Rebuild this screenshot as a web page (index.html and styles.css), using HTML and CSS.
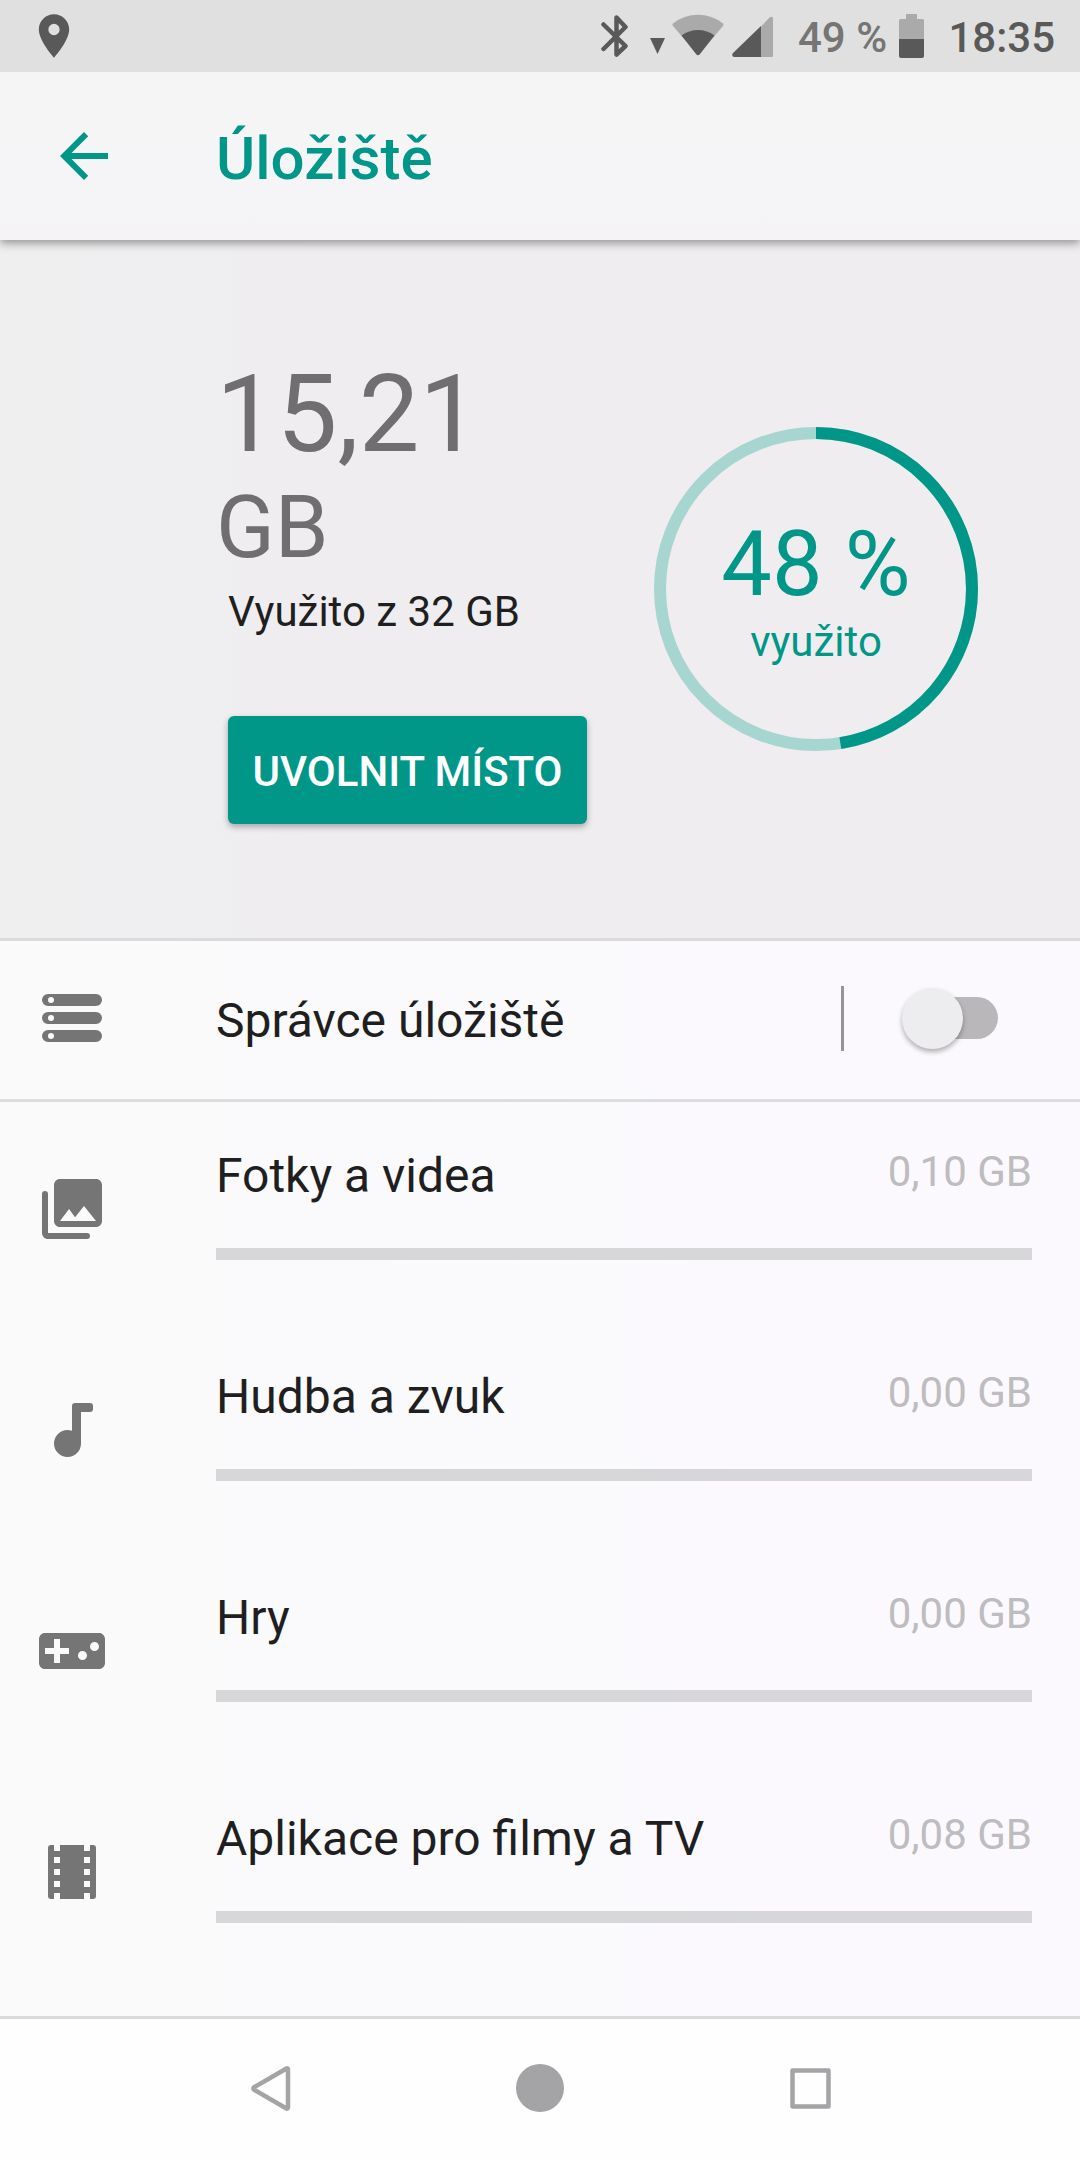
FILE: index.html
```html
<!DOCTYPE html>
<html lang="cs">
<head>
<meta charset="utf-8">
<title>Úložiště</title>
<link rel="stylesheet" href="styles.css">
</head>
<body>
<div class="screen">
  <div class="status">
    <svg class="pin" viewBox="0 0 24 24" width="52" height="52"><path fill-rule="evenodd" d="M12 2C8.130 2 5 5.130 5 9c0 5.250 7 13 7 13s7-7.750 7-13c0-3.870-3.130-7-7-7zm0 9.600a2.600 2.600 0 0 1 0-5.200 2.600 2.600 0 0 1 0 5.200z"/></svg>
    <svg class="bluetooth" viewBox="0 0 28 44" width="28" height="44"><path d="M2.500 10.500 24.500 32 15.500 40.500V3.500L24.500 13 2.500 35" fill="none" stroke="#595959" stroke-width="4.500" stroke-linecap="round" stroke-linejoin="round"/></svg>
    <svg class="data" viewBox="0 0 15 16" width="15" height="16"><path d="M0 0h15L7.500 16z"/></svg>
    <svg class="wifi" viewBox="0 0 52 42" width="52" height="42"><path class="dim" d="M1 9.500Q12 .8 26 .8t25 8.700q1 1 .2 2.200L42 22.500 26 40 10 22.500 .8 11.700Q0 10.500 1 9.500z"/><path d="M9.500 21.500Q17 16 26 16t16.500 5.500L28 40q-2 2.500-4 0z"/></svg>
    <svg class="signal" viewBox="0 0 41 42" width="41" height="42"><path class="dim" d="M29 10.500 37 2q4-3 4 1v37q0 1-1 1H29z"/><path d="M29 10v31H2q-3-1-1-4z"/></svg>
    <span class="percent">49 %</span>
    <svg class="battery" viewBox="0 0 25 44" width="25" height="44"><path class="dim" d="M7 0h11v5h5.500Q25 5 25 6.500V25H0V6.500Q0 5 1.500 5H7z"/><path d="M0 25h25v17q0 2-2 2H2q-2 0-2-2z"/></svg>
    <span class="clock">18:35</span>
  </div>

  <header class="appbar">
    <svg viewBox="0 0 24 24" width="72" height="72"><path d="M20 11H7.830l5.590-5.590L12 4l-8 8 8 8 1.410-1.410L7.830 13H20z"/></svg>
    <h1>Úložiště</h1>
  </header>

  <section class="summary">
    <div class="usage">
      <div class="amount">15,21</div>
      <div class="unit">GB</div>
      <div class="total">Využito z 32 GB</div>
      <button class="free">UVOLNIT MÍSTO</button>
    </div>
    <div class="ring">
      <svg viewBox="0 0 324 324" width="324" height="324"><circle class="track" cx="162" cy="162" r="156"/><circle class="value" cx="162" cy="162" r="156" pathLength="100" stroke-dasharray="47.5 52.5" transform="rotate(-90 162 162)"/></svg>
      <div class="ring-text"><div class="ring-value">48 %</div><div class="ring-label">využito</div></div>
    </div>
  </section>

  <section class="manager">
    <svg class="icon" viewBox="0 0 24 24" width="72" height="72"><path fill-rule="evenodd" d="M4 4h16a2 2 0 0 1 0 4H4a2 2 0 0 1 0-4zM5 5a1 1 0 0 0 0 2 1 1 0 0 0 0-2zM4 10h16a2 2 0 0 1 0 4H4a2 2 0 0 1 0-4zm1 1a1 1 0 0 0 0 2 1 1 0 0 0 0-2zM4 16h16a2 2 0 0 1 0 4H4a2 2 0 0 1 0-4zm1 1a1 1 0 0 0 0 2 1 1 0 0 0 0-2z"/></svg>
    <span class="name">Správce úložiště</span>
    <span class="divider"></span>
    <span class="switch"><span class="thumb"></span></span>
  </section>

  <main class="list">
    <div class="item">
      <svg class="icon" viewBox="0 0 24 24" width="72" height="72"><path d="M22 16V4c0-1.100-.9-2-2-2H8c-1.100 0-2 .9-2 2v12c0 1.100.9 2 2 2h12c1.100 0 2-.9 2-2zm-11-4 2.030 2.710L16 11l4 5H8zM2 7a1 1 0 0 1 2 0v13h13a1 1 0 0 1 0 2H4c-1.100 0-2-.9-2-2z"/></svg>
      <div class="body"><div class="line"><span class="name">Fotky a videa</span><span class="size">0,10 GB</span></div><div class="bar"></div></div>
    </div>
    <div class="item">
      <svg class="icon" viewBox="0 0 24 24" width="72" height="72"><path d="M12 4v8.280c-.47-.17-.97-.28-1.500-.28a4.500 4.500 0 1 0 4.500 4.500V6h3a1 1 0 0 0 1-1V4a1 1 0 0 0-1-1h-5a1 1 0 0 0-1 1z"/></svg>
      <div class="body"><div class="line"><span class="name">Hudba a zvuk</span><span class="size">0,00 GB</span></div><div class="bar"></div></div>
    </div>
    <div class="item">
      <svg class="icon" viewBox="0 0 24 24" width="72" height="72"><path d="M21 6H3c-1.100 0-2 .9-2 2v8c0 1.100.9 2 2 2h18c1.100 0 2-.9 2-2V8c0-1.100-.9-2-2-2zm-10 7H8v3H6v-3H3v-2h3V8h2v3h3zm4.500 2a1.500 1.500 0 0 1 0-3 1.500 1.500 0 0 1 0 3zm4-3a1.500 1.500 0 0 1 0-3 1.500 1.500 0 0 1 0 3z"/></svg>
      <div class="body"><div class="line"><span class="name">Hry</span><span class="size">0,00 GB</span></div><div class="bar"></div></div>
    </div>
    <div class="item">
      <svg class="icon" viewBox="0 0 24 24" width="72" height="72"><path d="M18 3v2h-2V3H8v2H6V3H5a1 1 0 0 0-1 1v16a1 1 0 0 0 1 1h1v-2h2v2h8v-2h2v2h1a1 1 0 0 0 1-1V4a1 1 0 0 0-1-1zM8 17H6v-2h2zm0-4H6v-2h2zm0-4H6V7h2zm10 8h-2v-2h2zm0-4h-2v-2h2zm0-4h-2V7h2z"/></svg>
      <div class="body"><div class="line"><span class="name">Aplikace pro filmy a TV</span><span class="size">0,08 GB</span></div><div class="bar"></div></div>
    </div>
  </main>

  <nav class="nav">
    <svg viewBox="0 0 72 72" width="72" height="72"><path d="M52.500 16.500a1 1 0 0 1 1.500 .8V55.700a1 1 0 0 1-1.500 .8L20 37.700a1.500 1.500 0 0 1 0-2.400z"/></svg>
    <svg viewBox="0 0 72 72" width="72" height="72"><circle class="home" cx="36" cy="36" r="24"/></svg>
    <svg viewBox="0 0 72 72" width="72" height="72"><rect x="18.500" y="18.500" width="36" height="36"/></svg>
  </nav>
</div>
</body>
</html>
```
FILE: styles.css
```css
* { box-sizing: border-box; }
body { margin: 0; font-family: Roboto, sans-serif; }
svg { display: block; flex: none; }

.screen {
  width: 1080px;
  height: 2160px;
  display: flex;
  flex-direction: column;
  overflow: hidden;
  background: linear-gradient(90deg, #fafafa, #fafafc 30%, #fbf9fd 70%);
  color: #1f1f21;
}

.status {
  position: relative;
  z-index: 2;
  height: 72px;
  flex: none;
  display: flex;
  align-items: flex-start;
  padding: 0 25px 0 28px;
  background: #e0e0e0;
  fill: #595959;
  font-size: 42px;
  line-height: 49px;
  font-weight: 500;
  color: #595959;
}
.status .dim { fill: #aaa; }
.pin { margin-top: 10px; }
.bluetooth { margin: 14px 0 0 521px; }
.data { margin: 38px 0 0 21px; }
.wifi { margin: 14px 0 0 7px; }
.signal { margin: 16px 0 0 8px; }
.percent { margin: 13px 0 0 25px; width: 105px; color: #757575; white-space: nowrap; }
.battery { margin-top: 14px; }
.clock { margin: 13px 0 0 24px; white-space: nowrap; }

.appbar {
  position: relative;
  z-index: 1;
  height: 168px;
  flex: none;
  display: flex;
  align-items: center;
  gap: 96px;
  padding-left: 48px;
  background: linear-gradient(#f5f5f5, #f5f5f7 60%, #f5f3f6);
  box-shadow: 0 3px 9px rgba(0, 0, 0, 0.4);
  fill: #009688;
}
.appbar h1 {
  margin: 5px 0 0;
  font-size: 60px;
  line-height: 70px;
  font-weight: 500;
  color: #009688;
}

.summary {
  height: 701px;
  flex: none;
  display: flex;
  justify-content: space-between;
  align-items: flex-start;
  padding: 0 102px 0 216px;
  background: linear-gradient(90deg, #efeff0, #efedf0 30%);
  border-bottom: 3px solid #dbdadd;
}
.usage { padding-top: 111px; }
.amount { font-size: 108px; line-height: 126px; color: #706e71; }
.unit { font-size: 86.4px; line-height: 102px; color: #706e71; }
.total { margin: 8px 0 0 12px; font-size: 42px; line-height: 49px; }
.free {
  display: block;
  width: 359px;
  height: 108px;
  margin: 80px 0 0 12px;
  padding: 3px 0 0;
  border: 0;
  border-radius: 6px;
  background: #009688;
  box-shadow: 0 3px 6px rgba(0, 0, 0, 0.3);
  color: #fff;
  font: 500 42px/49px Roboto, sans-serif;
  white-space: nowrap;
}
.ring { display: grid; margin-top: 187px; color: #009688; text-align: center; }
.ring > * { grid-area: 1 / 1; }
.ring circle { fill: none; stroke-width: 12; }
.ring .track { stroke: #a7d5cf; }
.ring .value { stroke: #009688; }
.ring-text { padding-top: 85px; }
.ring-value { font-size: 90px; line-height: 106px; }
.ring-label { margin-top: -1px; font-size: 42px; line-height: 49px; }

.icon { fill: #757575; }
.name { font-size: 48px; line-height: 56px; white-space: nowrap; }

.manager {
  height: 161px;
  flex: none;
  display: flex;
  align-items: center;
  padding: 0 82px 0 36px;
  border-bottom: 3px solid #dddcdf;
}
.manager .icon { margin-top: -4px; }
.manager .name { margin: 1px auto 0 108px; }
.divider { width: 3px; height: 65px; margin-top: -3px; background: #969499; }
.switch {
  width: 90px;
  height: 42px;
  margin: -4px 0 0 64px;
  border-radius: 21px;
  background: #b9b7ba;
  display: flex;
  align-items: center;
}
.thumb {
  width: 61px;
  height: 61px;
  flex: none;
  margin-left: -6px;
  border-radius: 50%;
  background: #edecee;
  box-shadow: 0 3px 5px rgba(0, 0, 0, 0.3);
}

.list { flex: 1; }
.item { height: 221px; display: flex; gap: 108px; padding: 45px 48px 0 36px; }
.item .icon { margin-top: 26px; }
.body { flex: 1; }
.line { display: flex; justify-content: space-between; align-items: flex-start; }
.line .name { padding-top: 1px; }
.size { font-size: 42px; line-height: 49px; color: #bdbcbf; }
.bar { height: 12px; margin-top: 44px; background: #d7d6d9; }

.nav {
  height: 144px;
  flex: none;
  display: flex;
  justify-content: center;
  gap: 198px;
  padding-top: 33px;
  background: #fefefe;
  border-top: 3px solid #dad9dc;
  fill: none;
  stroke: #a4a4a6;
  stroke-width: 4.500;
  stroke-linejoin: round;
}
.home { fill: #a4a4a6; stroke: none; }
```
